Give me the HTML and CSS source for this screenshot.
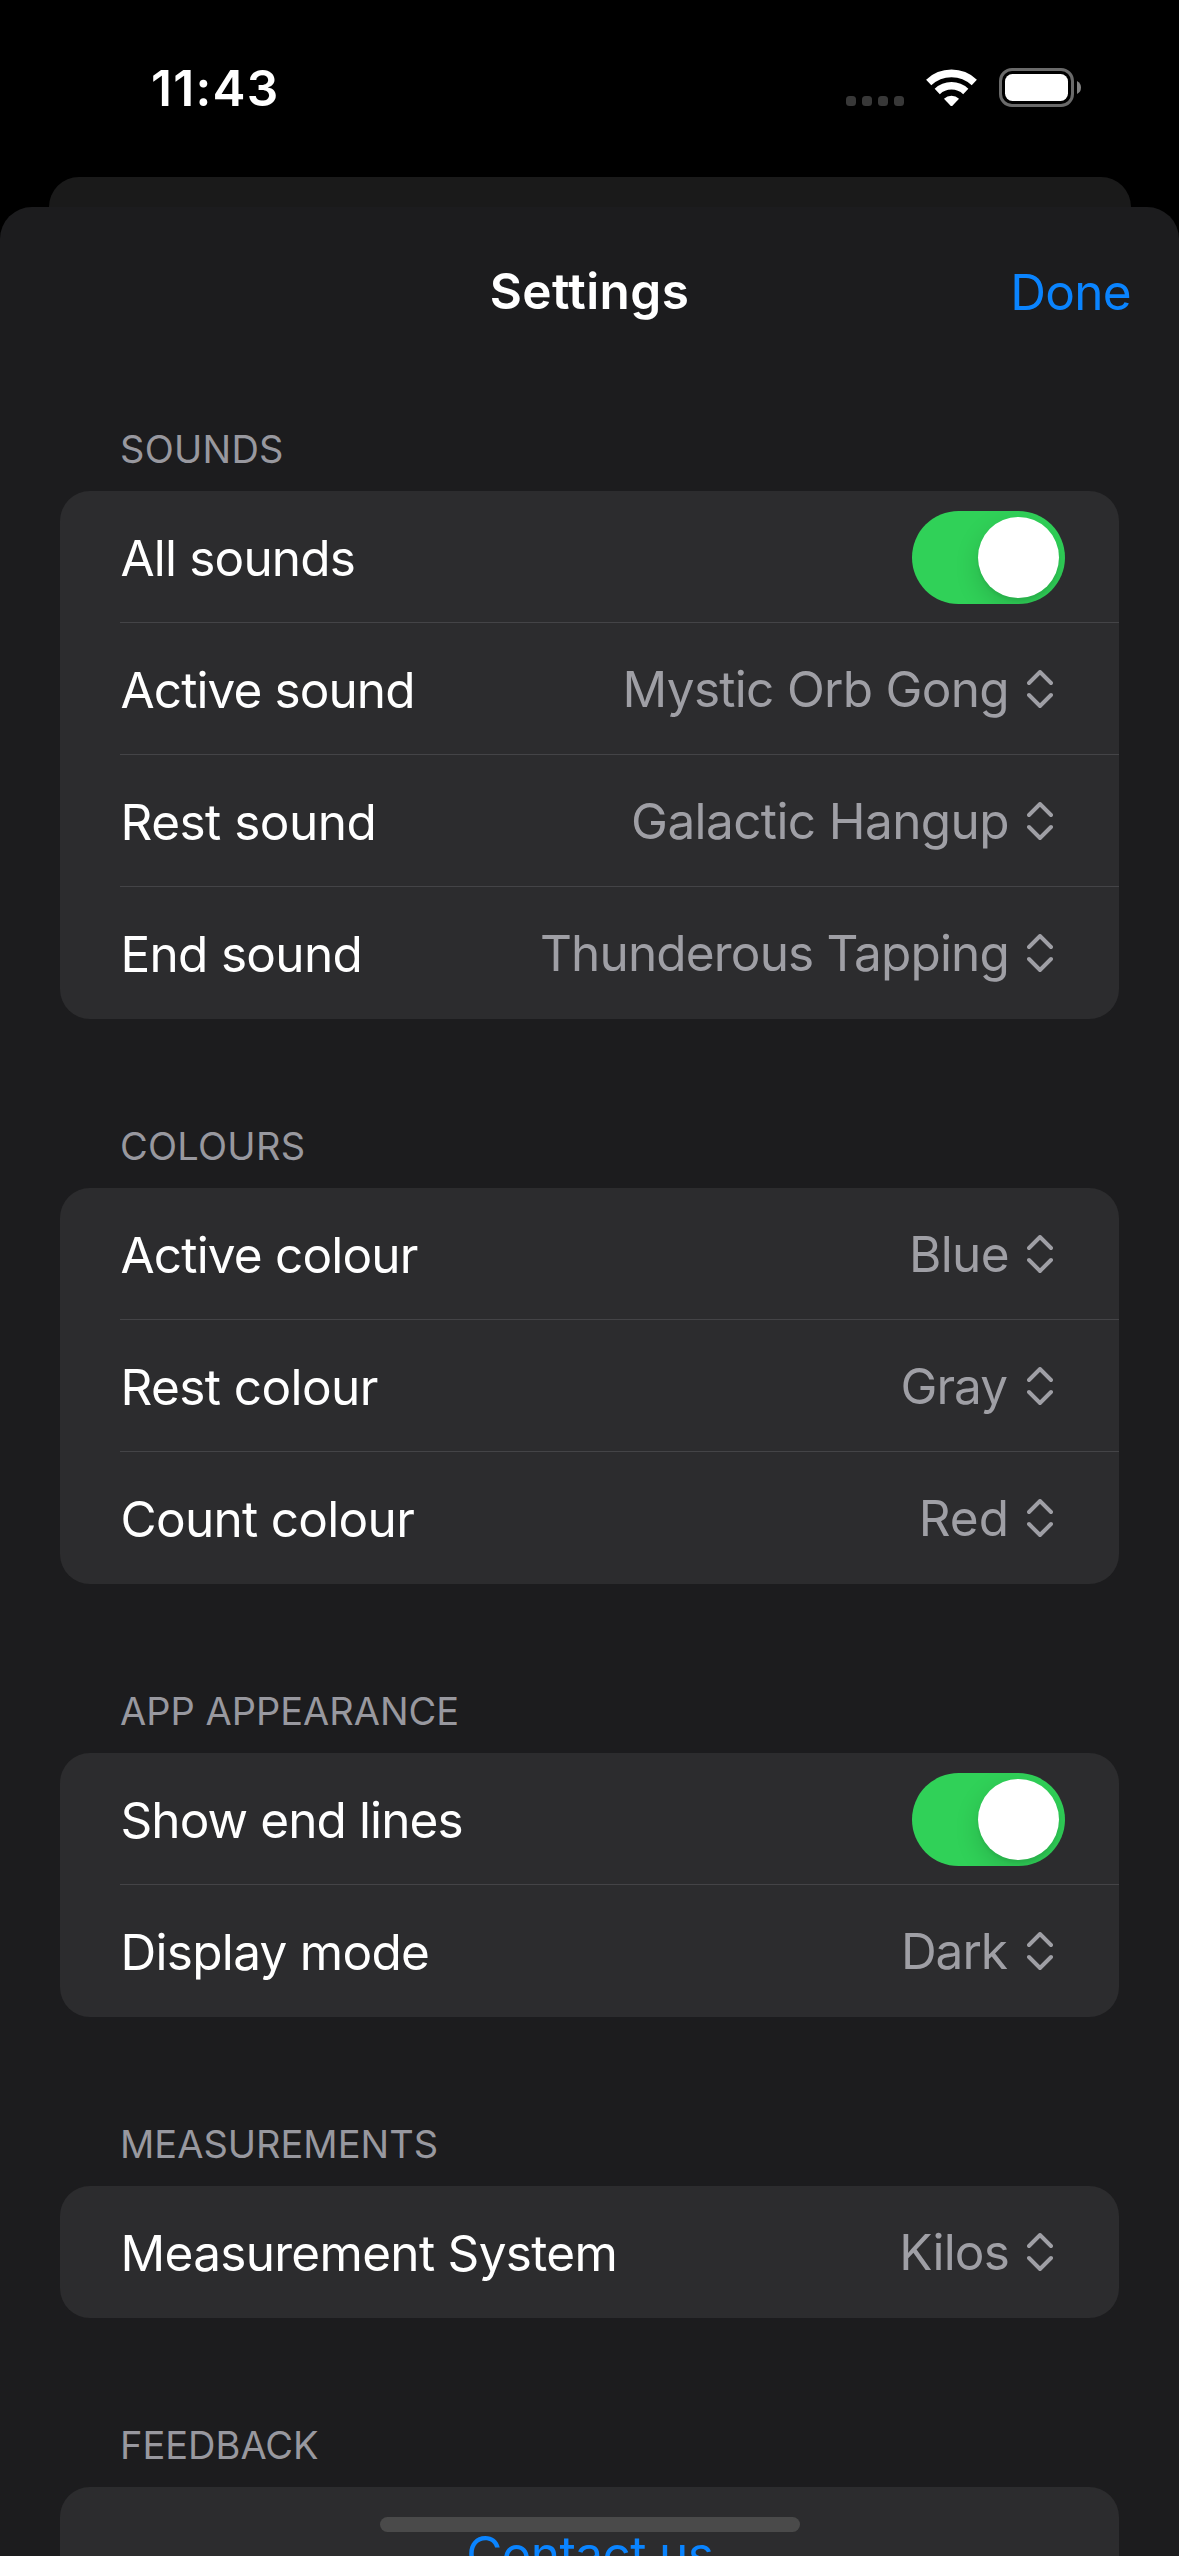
FILE: index.html
```html
<!DOCTYPE html>
<html lang="en">
<head>
<meta charset="utf-8">
<title>Settings</title>
<link rel="stylesheet" href="styles.css">
</head>
<body>
<svg class="defs" aria-hidden="true">
  <symbol id="updown" viewBox="0 0 26 38">
    <path d="M2 13 13 2 24 13M2 25 13 36 24 25" fill="none" stroke="currentColor" stroke-width="3.9" stroke-linecap="round" stroke-linejoin="round"/>
  </symbol>
</svg>
<div class="screen">
  <header class="status">
    <span class="time">11:43</span>
    <div class="status-icons">
      <span class="dots"><i></i><i></i><i></i><i></i></span>
      <svg class="wifi" viewBox="378 116 152 112">
        <g fill="none" stroke="#fff" stroke-width="22.5">
          <path d="M385.9 156.2A99 99 0 0 1 522.1 156.2"/>
          <path d="M411.4 183A62 62 0 0 1 496.6 183"/>
        </g>
        <path fill="#fff" d="M431.5 204.5A34 34 0 0 1 476.5 204.5L456 226.500Q454 228.500 452 226.500Z"/>
      </svg>
      <svg class="battery" viewBox="0 0 82 39">
        <rect x="1.500" y="1.500" width="72" height="36" rx="11.500" fill="none" stroke="#6a6a6a" stroke-width="3"/>
        <rect x="6" y="6" width="63" height="27" rx="7.500" fill="#fff"/>
        <path d="M78 13Q82 15 82 19.500Q82 24 78 26Z" fill="#828282"/>
      </svg>
    </div>
  </header>
  <div class="back-sheet"></div>
  <main class="sheet">
    <nav class="nav">
      <span></span>
      <h1 class="title">Settings</h1>
      <a class="done">Done</a>
    </nav>

    <section class="section">
      <h2 class="heading wide">SOUNDS</h2>
      <div class="card">
        <div class="row"><span class="label t8">All sounds</span><span class="toggle"><i class="knob"></i></span></div>
        <div class="row"><span class="label t9">Active sound</span><span class="value t7">Mystic Orb Gong<svg class="updown"><use href="#updown"/></svg></span></div>
        <div class="row"><span class="label t5">Rest sound</span><span class="value t6">Galactic Hangup<svg class="updown"><use href="#updown"/></svg></span></div>
        <div class="row"><span class="label t7">End sound</span><span class="value t8">Thunderous Tapping<svg class="updown"><use href="#updown"/></svg></span></div>
      </div>
    </section>

    <section class="section">
      <h2 class="heading wide">COLOURS</h2>
      <div class="card">
        <div class="row"><span class="label t8">Active colour</span><span class="value t6">Blue<svg class="updown"><use href="#updown"/></svg></span></div>
        <div class="row"><span class="label t6">Rest colour</span><span class="value t10 open">Gray<svg class="updown"><use href="#updown"/></svg></span></div>
        <div class="row"><span class="label t7">Count colour</span><span class="value">Red<svg class="updown"><use href="#updown"/></svg></span></div>
      </div>
    </section>

    <section class="section">
      <h2 class="heading">APP APPEARANCE</h2>
      <div class="card">
        <div class="row"><span class="label t9">Show end lines</span><span class="toggle"><i class="knob"></i></span></div>
        <div class="row"><span class="label t7">Display mode</span><span class="value t10 open">Dark<svg class="updown"><use href="#updown"/></svg></span></div>
      </div>
    </section>

    <section class="section">
      <h2 class="heading">MEASUREMENTS</h2>
      <div class="card">
        <div class="row"><span class="label t7">Measurement System</span><span class="value t8">Kilos<svg class="updown"><use href="#updown"/></svg></span></div>
      </div>
    </section>

    <section class="section">
      <h2 class="heading">FEEDBACK</h2>
      <div class="card">
        <div class="row action"><a class="label link t6">Contact us</a></div>
      </div>
    </section>
  </main>
  <div class="home-indicator"></div>
</div>
</body>
</html>
```
FILE: styles.css
```css
* { box-sizing: border-box; }

html, body {
  margin: 0;
  background: #000;
}

.defs {
  display: none;
}

.screen {
  position: relative;
  display: flex;
  flex-direction: column;
  width: 1179px;
  height: 2556px;
  overflow: hidden;
  background: #000;
  color: #fff;
  font: 400 49.5px/60px Inter, "Liberation Sans", sans-serif;
}

/* Status bar */
.status {
  display: flex;
  flex: none;
  justify-content: space-between;
  align-items: center;
  height: 177px;
  padding: 0 98px 2px 151px;
}

.time {
  font-weight: 600;
  letter-spacing: 1.3px;
}

.status-icons {
  display: flex;
  align-items: center;
  gap: 22px;
}

.dots {
  display: flex;
  gap: 6px;
  margin-top: 27px;
}

.dots i {
  width: 10px;
  height: 10px;
  border-radius: 3.5px;
  background: #383838;
}

.wifi {
  width: 51px;
  height: 37.5px;
}

.battery {
  width: 82px;
  height: 39px;
}

/* Stacked sheets */
.back-sheet {
  flex: none;
  height: 30px;
  margin: 0 48px 0 48.5px;
  border-radius: 30px 30px 0 0;
  background: #1a1a1a;
}

.sheet {
  flex: none;
  border-radius: 32px 32px 0 0;
  background: #1c1c1e;
}

.nav {
  display: grid;
  grid-template-columns: 1fr auto 1fr;
  align-items: start;
  height: 115px;
  padding: 54px 48px 0;
}

.title {
  margin: 0;
  font-size: inherit;
  font-weight: 600;
  letter-spacing: 0.4px;
}

.done {
  margin-top: 1px;
  justify-self: end;
  color: #0a84ff;
  letter-spacing: -0.7px;
}

/* Grouped list */
.section {
  padding: 107px 60px 0;
}

.heading {
  margin: 0;
  padding: 0 60px 22px;
  color: #98989f;
  font-size: 38px;
  font-weight: 400;
  line-height: 40px;
}

.heading.wide {
  letter-spacing: 0.27px;
}

.card {
  border-radius: 30px;
  background: #2c2c2e;
}

.row {
  display: flex;
  justify-content: space-between;
  align-items: center;
  height: 132px;
  margin-left: 60px;
  padding-left: 0.5px;
  border-bottom: 1px solid #444447;
}

.row:last-child {
  border-bottom-color: transparent;
}

.label {
  margin-top: 3px;
}

.value {
  display: flex;
  align-items: center;
  gap: 18px;
  margin-top: 1px;
  margin-right: 66px;
  color: #9f9fa5;
}

.value.open {
  gap: 20px;
}

.updown {
  width: 26px;
  height: 38px;
}

.action {
  justify-content: center;
  margin-left: 0;
}

.link {
  color: #0a84ff;
}

/* Optical tracking steps */
.t5 { letter-spacing: -0.5px; }
.t6 { letter-spacing: -0.6px; }
.t7 { letter-spacing: -0.7px; }
.t8 { letter-spacing: -0.83px; }
.t9 { letter-spacing: -0.9px; }
.t10 { letter-spacing: -1px; }

.toggle {
  display: flex;
  justify-content: flex-end;
  width: 153px;
  height: 93px;
  margin-top: 2px;
  margin-right: 54px;
  padding: 6px;
  overflow: hidden;
  border-radius: 46.5px;
  background: #30d158;
}

.knob {
  width: 81px;
  height: 81px;
  border-radius: 50%;
  background: #fff;
  box-shadow: 0 9px 24px rgba(0, 0, 0, 0.15), 0 3px 3px rgba(0, 0, 0, 0.06);
}

.home-indicator {
  position: absolute;
  bottom: 24px;
  left: 380px;
  width: 420px;
  height: 15px;
  border-radius: 7.5px;
  background: #4a4a4a;
}
```
